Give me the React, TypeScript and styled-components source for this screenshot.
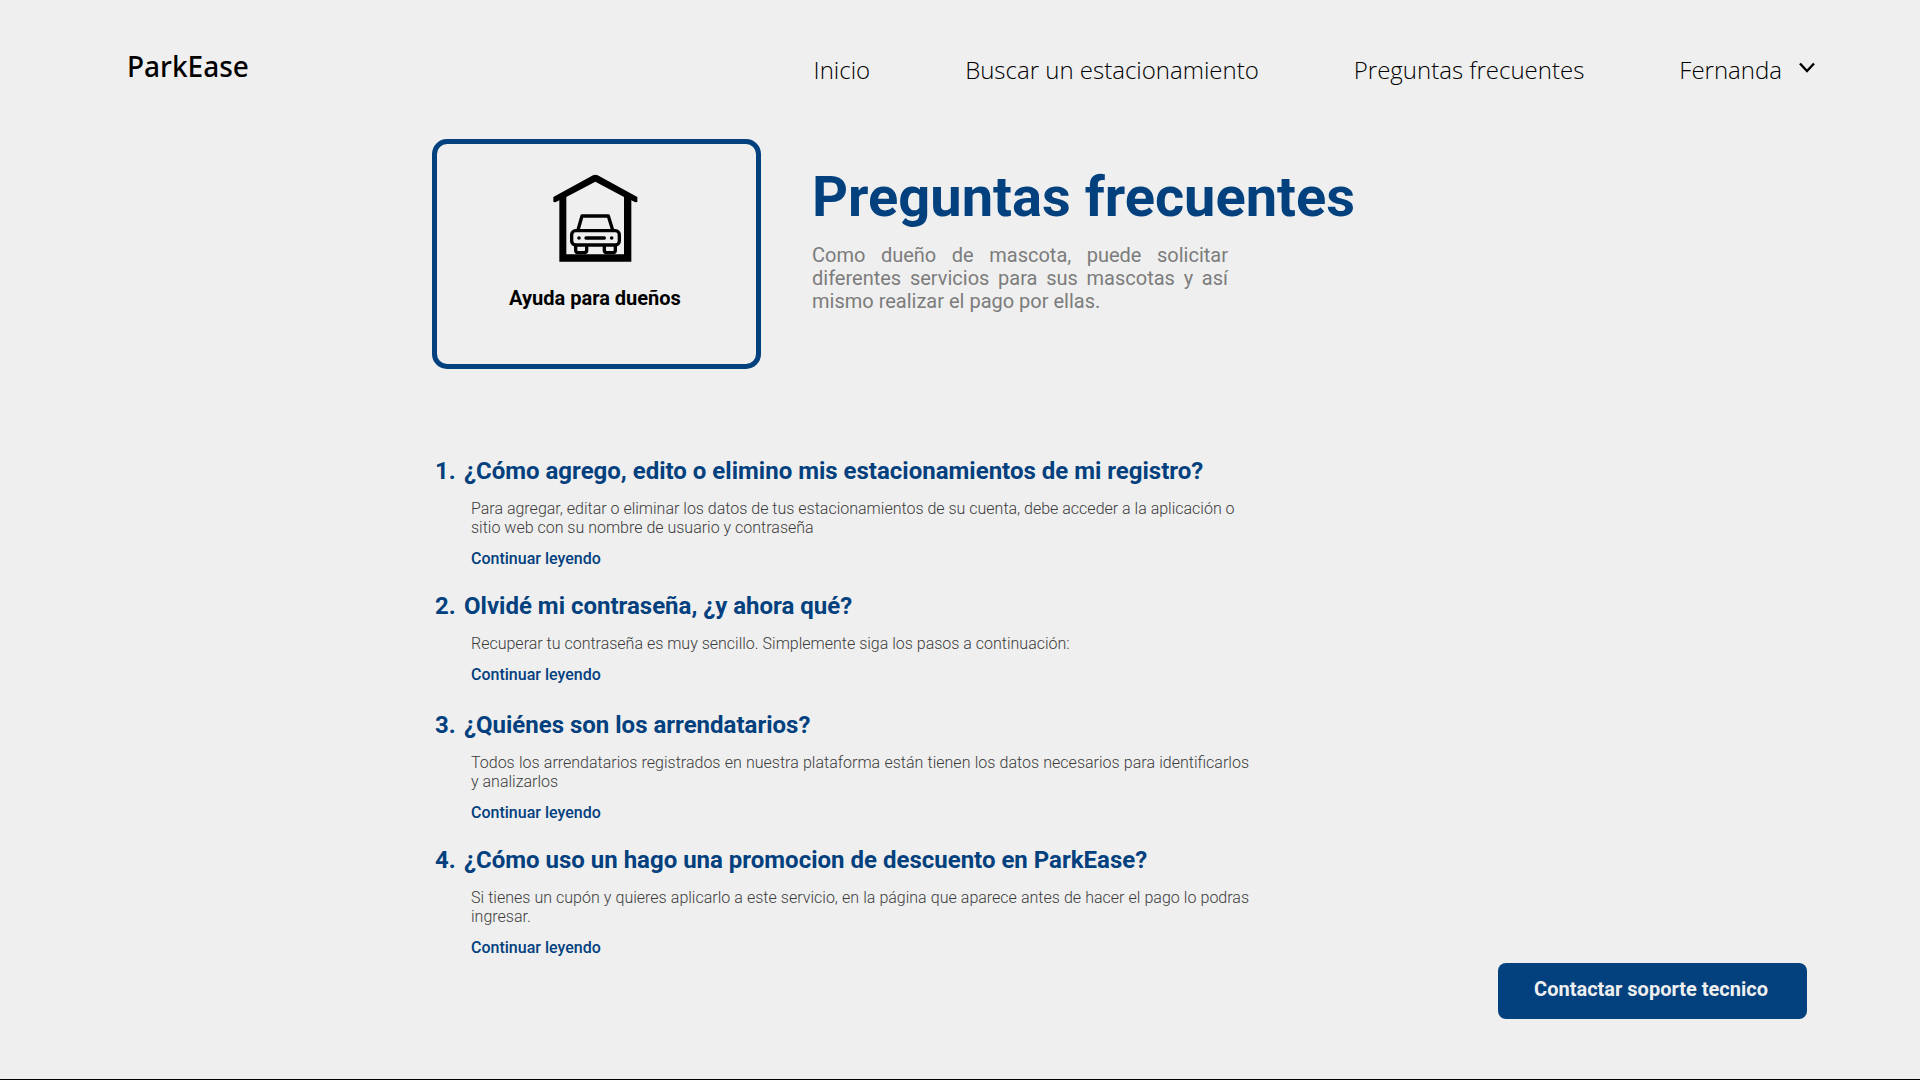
import React from "react";
import styled, { createGlobalStyle } from "styled-components";

const navy = "#03407e";

const GlobalStyle = createGlobalStyle`
  *, *::before, *::after { box-sizing: border-box; }
  body {
    margin: 0;
    background: #efefef;
    color: #000;
    font-family: Roboto, "Liberation Sans", sans-serif;
  }
  h1, h2, p, ol { margin: 0; padding: 0; }
  a { color: inherit; text-decoration: none; }
  button { font: inherit; cursor: pointer; }
`;

const Page = styled.div`
  display: flex;
  flex-direction: column;
  min-height: 100vh;
  border-bottom: 1px solid #000;
`;

const Header = styled.header`
  display: flex;
  justify-content: space-between;
  align-items: flex-start;
  padding: 47px 101px 0 127px;
  font-family: "Open Sans", "Noto Sans", sans-serif;
`;

const Brand = styled.a`
  font-family: "Noto Sans", "Open Sans", sans-serif;
  font-size: 28px;
  font-weight: 500;
  line-height: 38px;
`;

const Nav = styled.nav`
  display: flex;
  align-items: center;
  gap: 95px;
  padding-top: 6px;
  font-size: 24px;
  font-weight: 300;
  line-height: 34px;
`;

const UserButton = styled.button`
  display: flex;
  align-items: center;
  gap: 13px;
  padding: 0;
  border: 0;
  background: none;
  color: inherit;
`;

const Main = styled.main`
  flex: 1;
  display: flex;
  flex-direction: column;
  padding: 52px 113px 60px 432px;
`;

const Intro = styled.section`
  display: flex;
  align-items: flex-start;
  gap: 51px;
`;

const HelpCard = styled.a`
  display: flex;
  flex-direction: column;
  align-items: center;
  gap: 24px;
  width: 329px;
  min-height: 230px;
  padding: 30px 3px 0 0;
  border: 5px solid ${navy};
  border-radius: 15px;
  font-size: 20px;
  font-weight: 700;
  line-height: 24px;
`;

const IntroText = styled.div`
  padding-top: 25px;
`;

const Title = styled.h1`
  color: ${navy};
  font-size: 56px;
  font-weight: 700;
  line-height: 66px;
`;

const Lead = styled.p`
  max-width: 416px;
  margin-top: 14px;
  color: #7c7c7c;
  font-size: 20px;
  line-height: 23px;
  text-align: justify;
`;

const Questions = styled.ol`
  max-width: 820px;
  margin-top: 88px;
  padding-left: 3px;
  list-style: none;
`;

const Item = styled.li`
  display: grid;
  grid-template-columns: 29px 1fr;
  align-content: start;
  min-height: 119px;
  padding-bottom: 24px;

  &:last-child {
    min-height: 0;
    padding-bottom: 0;
  }
`;

const Question = styled.h2`
  display: contents;
  color: ${navy};
  font-size: 24px;
  font-weight: 700;
  line-height: 28px;
`;

const Answer = styled.div`
  grid-column: 2;
  padding: 14px 0 0 7px;
  font-size: 16px;
  line-height: 19px;
`;

const AnswerText = styled.p<{ $justified?: boolean }>`
  max-width: 778px;
  color: #3c3c3c;
  font-weight: 300;
  text-align: ${(props) => (props.$justified ? "justify" : "left")};
`;

const ReadMore = styled.a`
  display: block;
  width: max-content;
  margin-top: 12px;
  color: ${navy};
  font-weight: 500;
`;

const SupportButton = styled.button`
  align-self: flex-end;
  margin-top: auto;
  min-height: 56px;
  padding: 0 39px 4px 36px;
  border: 0;
  border-radius: 8px;
  background: ${navy};
  color: #efefef;
  && {
    font-size: 20px;
    font-weight: 700;
  }
`;

const questions = [
  {
    title: "¿Cómo agrego, edito o elimino mis estacionamientos de mi registro?",
    text: "Para agregar, editar o eliminar los datos de tus estacionamientos de su cuenta, debe acceder a la aplicación o sitio web con su nombre de usuario y contraseña",
  },
  {
    title: "Olvidé mi contraseña, ¿y ahora qué?",
    text: "Recuperar tu contraseña es muy sencillo. Simplemente siga los pasos a continuación:",
  },
  {
    title: "¿Quiénes son los arrendatarios?",
    text: "Todos los arrendatarios registrados en nuestra plataforma están tienen los datos necesarios para identificarlos y analizarlos",
    justified: true,
  },
  {
    title: "¿Cómo uso un hago una promocion de descuento en ParkEase?",
    text: "Si tienes un cupón y quieres aplicarlo a este servicio, en la página que aparece antes de hacer el pago lo podras ingresar.",
    justified: true,
  },
];

function Chevron() {
  return (
    <svg width="24" height="24" viewBox="0 0 24 24" fill="none" aria-hidden="true">
      <path d="M5 5.5l7 7.5 7-7.5" stroke="#000" strokeWidth="2.4" />
    </svg>
  );
}

function GarageIcon() {
  return (
    <svg width="85" height="88" viewBox="38 28 255 264" aria-hidden="true">
      <path
        fillRule="evenodd"
        d="M39 97L158 32Q165 28 172 32L291 97V112L285 113L273 107V291H57V107L45 113L39 112ZM78 97V269H251V97L165 51Z"
      />
      <g fill="none" stroke="#000" strokeWidth="10">
        <path d="M113 196L125 154H204L217 196" strokeLinejoin="round" />
        <rect x="94" y="198" width="143" height="43" rx="12" />
        <path d="M106 242V257Q106 264 113 264H132Q139 264 139 257V242" />
        <path d="M192 242V257Q192 264 199 264H218Q225 264 225 257V242" />
        <path d="M137 220H192" strokeLinecap="round" />
      </g>
      <circle cx="116" cy="220" r="5.5" />
      <circle cx="214" cy="220" r="5.5" />
    </svg>
  );
}

export default function App() {
  return (
    <>
      <GlobalStyle />
      <Page>
        <Header>
          <Brand href="#inicio">ParkEase</Brand>
          <Nav>
            <a href="#inicio">Inicio</a>
            <a href="#buscar">Buscar un estacionamiento</a>
            <a href="#preguntas">Preguntas frecuentes</a>
            <UserButton type="button">
              Fernanda
              <Chevron />
            </UserButton>
          </Nav>
        </Header>
        <Main>
          <Intro>
            <HelpCard href="#duenos">
              <GarageIcon />
              Ayuda para dueños
            </HelpCard>
            <IntroText>
              <Title>Preguntas frecuentes</Title>
              <Lead>
                Como dueño de mascota, puede solicitar diferentes servicios para sus mascotas y así mismo realizar el
                pago por ellas.
              </Lead>
            </IntroText>
          </Intro>
          <Questions>
            {questions.map((question, index) => (
              <Item key={question.title}>
                <Question>
                  <span>{index + 1}.</span>
                  <span>{question.title}</span>
                </Question>
                <Answer>
                  <AnswerText $justified={question.justified}>{question.text}</AnswerText>
                  <ReadMore href={`#pregunta-${index + 1}`}>Continuar leyendo</ReadMore>
                </Answer>
              </Item>
            ))}
          </Questions>
          <SupportButton type="button">Contactar soporte tecnico</SupportButton>
        </Main>
      </Page>
    </>
  );
}
